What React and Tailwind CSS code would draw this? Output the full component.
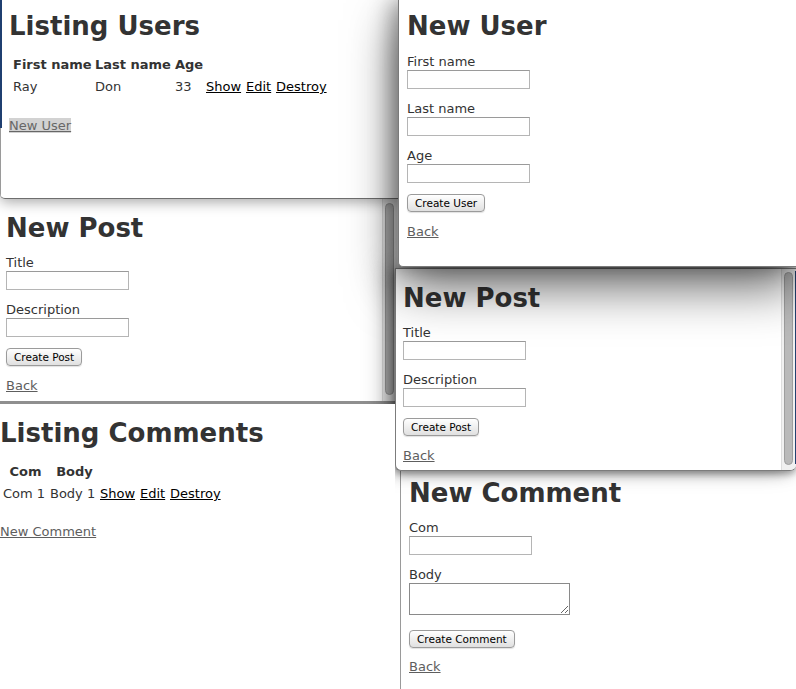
import React from "react";

function Heading({ children }) {
  return (
    <h1 className="whitespace-nowrap text-[26px] font-bold leading-[30px] text-[#333]">
      {children}
    </h1>
  );
}

function Field({ label, className = "" }) {
  return (
    <div className={className}>
      <div className="text-[13px] leading-[18px] text-[#333]">{label}</div>
      <input
        type="text"
        className="-mt-px block h-[19px] w-[123px] border border-[#b5b5b5] border-t-[#9a9a9a] bg-white"
      />
    </div>
  );
}

function MacButton({ children, className = "" }) {
  return (
    <button
      type="button"
      className={`block h-[18px] whitespace-nowrap rounded-[4px] border border-[#9b9b9b] bg-linear-to-b from-white to-[#e0e0e0] px-[7px] text-[10.5px] leading-[16px] text-black shadow-[0_1px_1px_rgba(0,0,0,0.12)] ${className}`}
    >
      {children}
    </button>
  );
}

function Back({ className = "" }) {
  return (
    <div className={`text-[13px] leading-[18px] ${className}`}>
      <a href="#" className="text-[#5e5e5e] underline">
        Back
      </a>
    </div>
  );
}

function Link({ children }) {
  return (
    <a href="#" className="text-black underline">
      {children}
    </a>
  );
}

function ScrollBar({ thumbClass }) {
  return (
    <>
      <div className="absolute bottom-0 right-0 top-0 w-[15px] border-l border-[#dedede] bg-[#f0f0f0]" />
      <div
        className={`absolute w-[9px] rounded-full border border-[#9e9e9e] bg-[#b9b9b9] ${thumbClass}`}
      />
    </>
  );
}

export default function App() {
  return (
    <div className="relative h-[689px] w-[796px] overflow-hidden bg-white font-['DejaVu_Sans',Verdana,sans-serif] text-[#333]">
      {/* New Comment (bottom right) */}
      <div className="absolute left-[400px] top-[460px] h-[229px] w-[396px] border-l border-[#9a9a9a] bg-white">
        <div className="pl-[8px] pt-[18px]">
          <Heading>New Comment</Heading>
          <Field label="Com" className="mt-[11px]" />
          <div className="mt-[11px]">
            <div className="text-[13px] leading-[18px]">Body</div>
            <textarea className="-mt-px block h-[32px] w-[161px] resize border border-[#8a8a8a] bg-white" />
          </div>
          <MacButton className="mt-[15px]">Create Comment</MacButton>
          <Back className="mt-[10px]" />
        </div>
      </div>

      {/* New Post (left) */}
      <div className="absolute left-0 top-[199px] h-[205px] w-[397px] overflow-hidden border-b-[3px] border-[#8f8f8f] bg-white">
        <div className="pl-[6px] pt-[14px]">
          <Heading>New Post</Heading>
          <Field label="Title" className="mt-[11px]" />
          <Field label="Description" className="mt-[11px]" />
          <MacButton className="mt-[11px]">Create Post</MacButton>
          <Back className="mt-[11px]" />
        </div>
        <ScrollBar thumbClass="right-[3px] top-[4px] h-[192px]" />
      </div>

      {/* New Post (right) */}
      <div className="absolute left-[395px] top-[268px] h-[203px] w-[401px] overflow-hidden rounded-b-[6px] border border-r-0 border-[#7c7c7c] bg-white shadow-[-8px_-4px_24px_rgba(0,0,0,0.35),-4px_0_16px_rgba(0,0,0,0.35),0_3px_6px_rgba(0,0,0,0.25)]">
        <div className="pl-[7px] pt-[14px]">
          <Heading>New Post</Heading>
          <Field label="Title" className="mt-[11px]" />
          <Field label="Description" className="mt-[11px]" />
          <MacButton className="mt-[11px]">Create Post</MacButton>
          <Back className="mt-[11px]" />
        </div>
        <ScrollBar thumbClass="right-[3px] top-[3px] h-[193px]" />
        <div className="absolute bottom-[6px] right-0 top-[2px] w-px bg-[#22416f]" />
      </div>

      {/* Listing Comments */}
      <div className="absolute left-0 top-[404px] h-[285px] w-[395px] bg-white">
        <div className="pt-[14px]">
          <Heading>Listing Comments</Heading>
          <div className="ml-[3px] mt-[15px] grid grid-cols-[42px_45px_35px_25px_auto] gap-x-[5px] gap-y-[4px] text-[13px] leading-[18px]">
            <div className="pl-[3px] text-center font-bold">Com</div>
            <div className="pl-[4px] text-center font-bold">Body</div>
            <div className="col-span-3" />
            <div className="whitespace-nowrap">Com 1</div>
            <div className="whitespace-nowrap">Body 1</div>
            <div>
              <Link>Show</Link>
            </div>
            <div>
              <Link>Edit</Link>
            </div>
            <div>
              <Link>Destroy</Link>
            </div>
          </div>
          <div className="mt-[20px] text-[13px] leading-[18px]">
            <a href="#" className="text-[#5e5e5e] underline">
              New Comment
            </a>
          </div>
        </div>
      </div>

      {/* Listing Users */}
      <div className="absolute left-0 top-0 h-[199px] w-[398px] overflow-hidden rounded-bl-[5px] border-b border-[#6e6e6e] bg-white shadow-[0_3px_14px_rgba(0,0,0,0.35)]">
        <div className="absolute left-0 top-0 h-[128px] w-[2px] bg-[#1f3f70]" />
        <div className="absolute bottom-0 left-0 top-[128px] w-px bg-[#9a9a9a]" />
        <div className="pl-[9px] pt-[11px]">
          <Heading>Listing Users</Heading>
          <div className="ml-[4px] mt-[15px] grid grid-cols-[77px_75px_26px_35px_25px_auto] gap-x-[5px] gap-y-[4px] text-[13px] leading-[18px]">
            <div className="whitespace-nowrap font-bold">First name</div>
            <div className="whitespace-nowrap font-bold">Last name</div>
            <div className="font-bold">Age</div>
            <div className="col-span-3" />
            <div>Ray</div>
            <div>Don</div>
            <div>33</div>
            <div>
              <Link>Show</Link>
            </div>
            <div>
              <Link>Edit</Link>
            </div>
            <div>
              <Link>Destroy</Link>
            </div>
          </div>
          <div className="mt-[21px] text-[13px] leading-[18px]">
            <a href="#" className="bg-[#d2d2d2] text-[#676767] underline">
              New User
            </a>
          </div>
        </div>
      </div>

      {/* New User */}
      <div className="absolute left-[398px] top-0 h-[267px] w-[398px] rounded-bl-[5px] border-b border-l border-[#7a7a7a] bg-white shadow-[0_20px_50px_rgba(0,0,0,0.6),-6px_0_22px_rgba(0,0,0,0.35)]">
        <div className="pl-[8px] pt-[11px]">
          <Heading>New User</Heading>
          <Field label="First name" className="mt-[12px]" />
          <Field label="Last name" className="mt-[11px]" />
          <Field label="Age" className="mt-[11px]" />
          <MacButton className="mt-[11px]">Create User</MacButton>
          <Back className="mt-[11px]" />
        </div>
      </div>
    </div>
  );
}
